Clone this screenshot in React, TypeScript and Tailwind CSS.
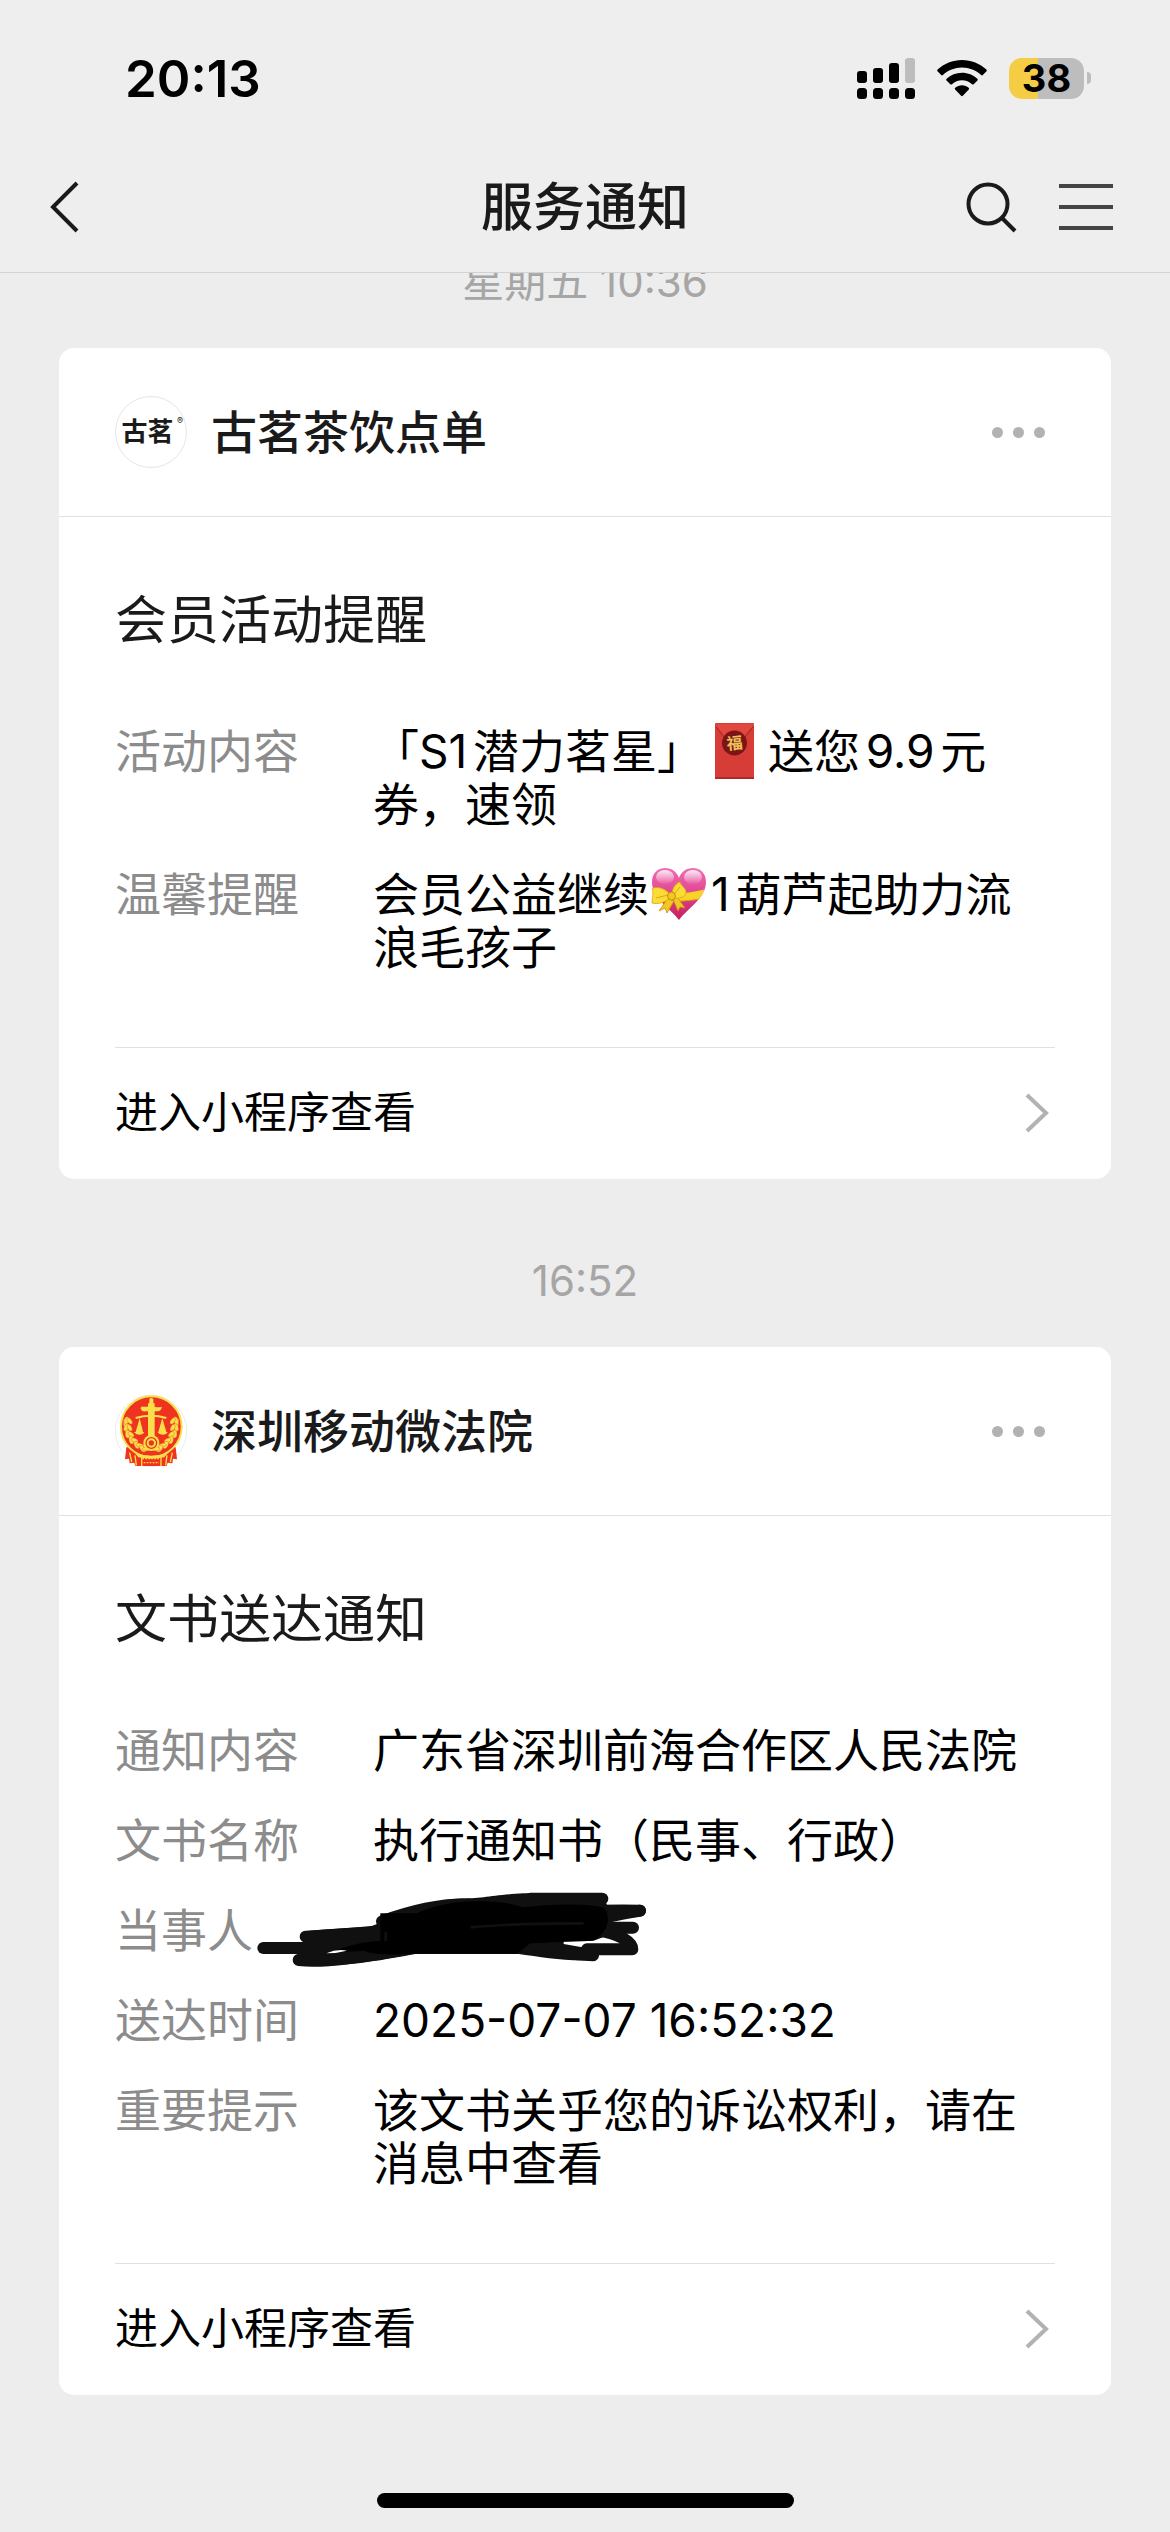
import type React from "react"

interface Field {
  label: string
  value: React.ReactNode
  hidden?: boolean
}

interface ServiceCardProps {
  avatar: React.ReactNode
  name: string
  title: string
  fields: Field[]
}

const SignalIcon = () => (
  <svg className="w-[58px] h-[41px]" viewBox="0 0 58 41" aria-hidden="true">
    <rect x="0" y="13" width="10" height="12" rx="3" />
    <rect x="16" y="10" width="10" height="15" rx="3" />
    <rect x="32" y="5" width="10" height="20" rx="3" />
    <rect x="48" y="0" width="10" height="25" rx="3" fill="#bdbdbd" />
    <rect x="0" y="30" width="10" height="11" rx="3.5" />
    <rect x="16" y="30" width="10" height="11" rx="3.5" />
    <rect x="32" y="30" width="10" height="11" rx="3.5" />
    <rect x="48" y="30" width="10" height="11" rx="3.5" />
  </svg>
)

const WifiIcon = () => (
  <svg className="w-[50px] h-[37px]" viewBox="0 0 50 37" aria-hidden="true">
    <path d="M25 0c9.300 0 17.900 3.600 24.400 9.600.5.500.5 1.200.1 1.700l-3.700 3.800c-.5.500-1.200.5-1.700 0C39 10.400 32.300 7.600 25 7.600S11 10.400 5.900 15.100c-.5.500-1.200.5-1.700 0L.5 11.300c-.5-.5-.4-1.200.1-1.700C7.100 3.600 15.700 0 25 0z" />
    <path d="M25 12.700c5.900 0 11.300 2.300 15.400 6 .5.500.5 1.200.1 1.700l-3.800 3.800c-.5.500-1.200.5-1.700 0a14.600 14.600 0 0 0-20 0c-.5.500-1.200.5-1.700 0l-3.800-3.800c-.5-.5-.4-1.200.1-1.700 4.100-3.700 9.500-6 15.400-6z" />
    <path d="M25 25.300c2.500 0 4.900.9 6.700 2.500.5.500.5 1.200.1 1.700l-6 6.300c-.5.500-1.200.5-1.700 0l-6-6.300c-.5-.5-.4-1.200.1-1.700 1.900-1.600 4.300-2.500 6.800-2.500z" />
  </svg>
)

const Battery = () => (
  <div className="flex items-center gap-[3px]">
    <div className="flex h-[41px] w-[75px] items-center justify-center rounded-[13px] bg-linear-to-r from-[#f5cd45] from-39% to-[#bdbdbd] to-39% text-[38px] leading-none font-bold">
      38
    </div>
    <div className="h-[12px] w-[4px] rounded-r-full bg-[#bdbdbd]" />
  </div>
)

const RedEnvelope = () => (
  <svg
    className="-my-3 mr-[14px] ml-[12px] inline-block h-[56px] w-[39px] align-[1px]"
    viewBox="0 0 39 56"
    role="img"
    aria-label="红包"
  >
    <rect width="39" height="56" rx="1" fill="#d83c36" />
    <path d="M0 1h39L30 12c-4 5-17 5-21 0z" fill="#e2483f" />
    <path d="M1 4l8 10c5 6 16 6 21 0l8-10" fill="none" stroke="#a32722" strokeWidth="1" />
    <path d="M0 55h39" stroke="#b22a26" strokeWidth="2" />
    <circle cx="19.500" cy="20" r="12.500" fill="#7c1616" />
    <text
      x="19.500"
      y="26"
      textAnchor="middle"
      fontSize="16"
      fontWeight="700"
      fill="#ecc15c"
      transform="rotate(-6 19.500 20)"
    >
      福
    </text>
  </svg>
)

const RibbonHeart = () => (
  <svg
    className="-my-3 mr-[4px] ml-[2px] inline-block h-[52px] w-[56px] align-[3px]"
    viewBox="0 0 56 52"
    role="img"
    aria-label="礼物爱心"
  >
    <defs>
      <linearGradient id="heart" x1="0" y1="0" x2="0" y2="1">
        <stop offset="0" stopColor="#ef6fb4" />
        <stop offset="0.500" stopColor="#e0438f" />
        <stop offset="1" stopColor="#c41f5e" />
      </linearGradient>
      <linearGradient id="shine" x1="0" y1="0" x2="0" y2="1">
        <stop offset="0" stopColor="#fff" stopOpacity="0.850" />
        <stop offset="1" stopColor="#fff" stopOpacity="0.050" />
      </linearGradient>
      <clipPath id="heartClip">
        <path d="M28 52C20 41 1 30 1 14 1 5 7 0 14 0c7 0 12 4 14 10C30 4 35 0 42 0c7 0 13 5 13 14 0 16-19 27-27 38z" />
      </clipPath>
    </defs>
    <g clipPath="url(#heartClip)">
      <rect width="56" height="52" fill="url(#heart)" />
      <path d="M0 24q28 4 56-3v9q-28 5-56 3z" fill="#f7d426" />
      <path d="M0 33q28 2 56-3" fill="none" stroke="#d99a14" strokeWidth="1" />
      <ellipse cx="14" cy="9" rx="9" ry="7" fill="url(#shine)" />
      <ellipse cx="42" cy="9" rx="9" ry="7" fill="url(#shine)" />
    </g>
    <path d="M17 30L8 43l6-3 2 5 7-12zM22 31l5 12 2-4 5 1-8-11z" fill="#f2c81f" stroke="#c9911a" strokeWidth="0.800" />
    <path d="M20 27C13 19 4 18 1 21c2 4 0 9 0 14 6 2 14-1 19-6z" fill="#fbdc35" stroke="#d9a51b" strokeWidth="0.800" />
    <path d="M21 27c0-7 4-12 8-13 1 4 6 6 6 10 0 5-7 7-13 6z" fill="#fbdc35" stroke="#d9a51b" strokeWidth="0.800" />
    <path d="M5 30l12-3M29 19l-6 7" stroke="#d9a51b" strokeWidth="1" />
    <circle cx="20.500" cy="28" r="4" fill="#f5c722" stroke="#b97d14" strokeWidth="0.800" />
  </svg>
)

const TeaLogo = () => (
  <div className="relative flex size-[72px] items-center justify-center rounded-full border border-[#e6e6e6] bg-white pr-[7px]">
    <span className="text-[26px] leading-none font-bold">古茗</span>
    <span className="absolute top-[19px] right-[3px] text-[9px] leading-none">®</span>
  </div>
)

const WHEAT = [
  [71, 152, -10],
  [71, 172, -4],
  [75, 192, -22],
  [86, 210, -38],
  [102, 225, -52],
  [120, 236, -66],
]

const CourtLogo = () => (
  <svg className="size-[72px]" viewBox="46 75 216 216" role="img" aria-label="法院徽章">
    <circle cx="154" cy="183" r="107" fill="#fff" stroke="#e3e3e3" strokeWidth="2" />
    <path d="M80 232l-4 36 12-2 2 14 14-2 3 10h94l3-10 14 2 2-14 12 2-4-36z" fill="#ee3420" />
    <path d="M90 248l6 28M106 256l4 30M218 248l-6 28M202 256l-4 30" stroke="#f9e04a" strokeWidth="4" />
    <circle cx="155" cy="170" r="91" fill="#ee3420" stroke="#f9e04a" strokeWidth="6" />
    {/* scales and column */}
    <path
      d="M149 88q6-10 12 0v12h4v10q12 4 22 0-2 12-14 14h-8v88h-20v-88h-8q-10 2-14-8 0-8 8-6h14v-10h4z"
      fill="#f9e04a"
    />
    <path d="M108 144q47-14 92 0" fill="none" stroke="#f9e04a" strokeWidth="6" />
    <path d="M120 144l-12 42h22zM188 144l-12 42h24z" fill="#f9e04a" />
    <path d="M103 186h31q-4 8-15 8t-16-8zM173 186h31q-4 8-15 8t-16-8z" fill="#f9e04a" />
    {/* wheat on both sides */}
    <path d="M76 148c-2 44 22 80 78 88 56-8 80-44 78-88" fill="none" stroke="#f9e04a" strokeWidth="9" />
    {WHEAT.map(([x, y, angle]) => (
      <g key={y} fill="#f9e04a" stroke="#ee3420" strokeWidth="1">
        <ellipse cx={x + 9} cy={y} rx="7" ry="12" transform={`rotate(${angle + 26} ${x + 9} ${y})`} />
        <ellipse cx={x + 19} cy={y + 1} rx="6" ry="11" transform={`rotate(${angle - 26} ${x + 19} ${y + 1})`} />
        <ellipse cx={300 - x} cy={y} rx="7" ry="12" transform={`rotate(${-angle - 26} ${300 - x} ${y})`} />
        <ellipse cx={290 - x} cy={y + 1} rx="6" ry="11" transform={`rotate(${26 - angle} ${290 - x} ${y + 1})`} />
      </g>
    ))}
    {/* gear */}
    <circle cx="155" cy="219" r="24" fill="#f9e04a" />
    <circle cx="155" cy="219" r="16" fill="none" stroke="#ee3420" strokeWidth="4" />
    <circle cx="155" cy="219" r="8" fill="#ee3420" />
    <path d="M106 250q49 14 98 0l-10 12q-39 8-78 0z" fill="#f9e04a" />
    <path d="M128 266h54M132 278h46" stroke="#f9e04a" strokeWidth="4" strokeDasharray="5 4" />
    <path d="M126 262v26M184 262v26" stroke="#f9e04a" strokeWidth="4" />
  </svg>
)

const Scribble = () => (
  <svg
    className="absolute -top-3 left-[142px] h-[76px] w-[390px]"
    viewBox="80 86 1170 228"
    role="img"
    aria-label="已涂抹"
  >
    <path
      d="M226 204L290 198L420 190C520 150 580 112 680 106C760 106 780 96 880 90H1116L1132 130L1134 180L1128 218L1090 232L1000 234V242L1090 258V290C1000 294 940 282 860 271H560C460 288 380 308 210 308L190 290L226 262V236Z"
      fill="#101010"
    />
    <g fill="none" stroke="#101010" strokeWidth="36" strokeLinecap="round" strokeLinejoin="round">
      <path d="M99 254H860" />
      <path d="M205 290C300 300 440 272 560 252" />
      <path d="M226 220C330 216 420 206 480 200" />
      <path d="M455 174C560 136 640 120 720 124" />
      <path d="M1116 106H900" />
      <path d="M1229 142C1120 140 980 146 860 156" />
      <path d="M1229 142C1180 150 1120 158 1050 190" />
      <path d="M1208 193H900" />
      <path d="M1070 258H1206C1206 236 1170 212 1100 200" />
      <path d="M1088 276C980 270 920 256 830 240" />
    </g>
    <path
      d="M450 150H560C640 110 780 100 880 132C960 120 1090 120 1122 134C1150 170 1120 220 1085 232C1010 236 960 236 900 240L860 271H560C480 276 420 272 400 262L300 268C370 240 400 236 450 232Z"
      fill="#000"
    />
    <path d="M288 270Q320 256 350 262Q320 270 288 270Z" fill="#fff" />
    <path d="M720 192C850 180 1010 180 1060 180M466 206V234" stroke="#101010" strokeWidth="8" fill="none" />
  </svg>
)

const ServiceCard: React.FC<ServiceCardProps> = ({ avatar, name, title, fields }) => {
  return (
    <article className="mx-[59px] overflow-hidden rounded-[15px] bg-white">
      <header className="flex h-[169px] items-center border-b border-[#e0e0e0] px-[56px]">
        {avatar}
        <h2 className="ml-[24px] flex-1 text-[46px] leading-[53px] font-medium">{name}</h2>
        <button type="button" aria-label="更多" className="flex gap-[10px] pr-[10px]">
          <span className="size-[11px] rounded-full bg-[#b2b2b2]" />
          <span className="size-[11px] rounded-full bg-[#b2b2b2]" />
          <span className="size-[11px] rounded-full bg-[#b2b2b2]" />
        </button>
      </header>

      <div className="px-[56px]">
        <h3 className="pt-[74px] text-[52px] leading-[60px]">{title}</h3>
        <dl className="mt-[74px] flex flex-col gap-[37px] text-[46px] leading-[53px] [text-autospace:normal]">
          {fields.map((field) => (
            <div key={field.label} className="relative flex">
              <dt className="w-[258px] shrink-0 text-[#8c8c8c]">{field.label}</dt>
              <dd className="flex-1 pr-[20px] text-black">{field.value}</dd>
              {field.hidden && <Scribble />}
            </div>
          ))}
        </dl>
        <button
          type="button"
          className="mt-[73px] flex h-[132px] w-full items-center justify-between border-t border-[#e0e0e0] pr-[5px] pb-[2px] text-[43px] text-black"
        >
          进入小程序查看
          <svg className="h-[40px] w-[26px]" viewBox="0 0 26 40" aria-hidden="true">
            <path d="M3 2l19 18L3 38" fill="none" stroke="#b2b2b2" strokeWidth="4" />
          </svg>
        </button>
      </div>
    </article>
  )
}

const App = () => {
  return (
    <div className="flex min-h-screen flex-col bg-[#ededed] font-['Inter','Noto_Sans_CJK_SC',sans-serif] text-[#1a1a1a]">
      <div className="sticky top-0 z-10 border-b border-[#d2d2d2] bg-[#eeeeee]">
        <div className="flex h-[141px] items-center justify-between pt-[15px] pr-[79px] pl-[125px] text-black">
          <time className="text-[51px] leading-none font-semibold">20:13</time>
          <div className="flex items-center gap-[22px]">
            <SignalIcon />
            <WifiIcon />
            <Battery />
          </div>
        </div>

        <nav className="grid h-[131px] grid-cols-[1fr_auto_1fr] items-center px-[50px]">
          <button type="button" aria-label="返回" className="w-[32px]">
            <svg className="h-[52px] w-[32px]" viewBox="0 0 32 52" aria-hidden="true">
              <path d="M27 2L3 26l24 24" fill="none" stroke="#1a1a1a" strokeWidth="4" />
            </svg>
          </button>
          <h1 className="pt-[2px] text-[52px] leading-none font-medium">服务通知</h1>
          <div className="flex items-center justify-end gap-[42px] pr-[7px]">
            <button type="button" aria-label="搜索">
              <svg className="size-[52px]" viewBox="0 0 52 52" aria-hidden="true">
                <g fill="none" stroke="#1a1a1a" strokeWidth="4">
                  <circle cx="23" cy="23" r="19.500" />
                  <path d="M37 37l13 13" />
                </g>
              </svg>
            </button>
            <button type="button" aria-label="菜单" className="flex flex-col gap-[17px]">
              <span className="h-[4px] w-[54px] bg-[#444444]" />
              <span className="h-[4px] w-[54px] bg-[#444444]" />
              <span className="h-[4px] w-[54px] bg-[#444444]" />
            </button>
          </div>
        </nav>
      </div>

      {/* the list is scrolled a little way under the nav bar */}
      <main className="-mt-[21px] flex-1">
        <p className="mb-[36px] text-center text-[42px] leading-[60px] text-[#a6a6a6]">星期五 10:36</p>
        <ServiceCard
          avatar={<TeaLogo />}
          name="古茗茶饮点单"
          title="会员活动提醒"
          fields={[
            {
              label: "活动内容",
              value: (
                <>
                  「S1潜力茗星」
                  <RedEnvelope />
                  送您9.9元券，速领
                </>
              ),
            },
            {
              label: "温馨提醒",
              value: (
                <>
                  会员公益继续
                  <RibbonHeart />
                  1葫芦起助力流浪毛孩子
                </>
              ),
            },
          ]}
        />
        <p className="mt-[72px] mb-[36px] text-center text-[42px] leading-[60px] text-[#a6a6a6]">16:52</p>
        <ServiceCard
          avatar={<CourtLogo />}
          name="深圳移动微法院"
          title="文书送达通知"
          fields={[
            { label: "通知内容", value: "广东省深圳前海合作区人民法院" },
            { label: "文书名称", value: "执行通知书（民事、行政）" },
            { label: "当事人", value: "", hidden: true },
            { label: "送达时间", value: "2025-07-07 16:52:32" },
            { label: "重要提示", value: "该文书关乎您的诉讼权利，请在消息中查看" },
          ]}
        />
      </main>

      <div className="flex justify-center pb-[24px]">
        <div className="h-[15px] w-[417px] rounded-full bg-black" />
      </div>
    </div>
  )
}

export default App
